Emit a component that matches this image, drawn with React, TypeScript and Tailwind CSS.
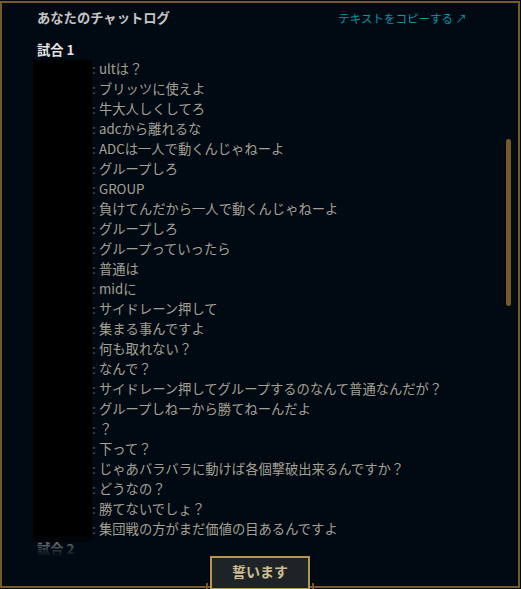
const matches = [
  {
    title: "試合 1",
    lines: [
      "ultは？",
      "ブリッツに使えよ",
      "牛大人しくしてろ",
      "adcから離れるな",
      "ADCは一人で動くんじゃねーよ",
      "グループしろ",
      "GROUP",
      "負けてんだから一人で動くんじゃねーよ",
      "グループしろ",
      "グループっていったら",
      "普通は",
      "midに",
      "サイドレーン押して",
      "集まる事んですよ",
      "何も取れない？",
      "なんで？",
      "サイドレーン押してグループするのなんて普通なんだが？",
      "グループしねーから勝てねーんだよ",
      "？",
      "下って？",
      "じゃあバラバラに動けば各個撃破出来るんですか？",
      "どうなの？",
      "勝てないでしょ？",
      "集団戦の方がまだ価値の目あるんですよ",
    ],
  },
  { title: "試合 2", lines: ["グループしろ", "GROUP"] },
];

function ChatBlock({ title, lines }: { title: string; lines: string[] }) {
  return (
    <div>
      <h3 className="h-[19px] pl-[35px] text-[13.3px] leading-[19px] font-bold text-[#e4e4e4]">{title}</h3>
      <div className="flex pl-[31px]">
        {/* names are hidden */}
        <div className="relative z-10 mt-px -mb-[3px] w-[59px] bg-black" />
        <ul>
          {lines.map((line, i) => (
            <li key={i} className="flex h-[20px] items-center text-[13.3px] text-[#a5a092]">
              <span className="w-[7px] text-[#58554d]">:</span>
              <span>{line}</span>
            </li>
          ))}
        </ul>
      </div>
    </div>
  );
}

export default function App() {
  return (
    <div
      className="min-h-screen bg-[#010a13] pt-px"
      style={{ fontFamily: '"Noto Sans CJK JP", "Noto Sans", sans-serif' }}
    >
      <div className="flex h-[587px] w-[520px] flex-col border-2 border-[#785a28]">
        <div className="flex h-[30px] shrink-0 items-center justify-between pl-[35px] pr-[51px]">
          <h2 className="text-[13.3px] font-bold text-[#c4c4c4]">あなたのチャットログ</h2>
          <a href="#" className="mt-[2px] text-[11.5px] text-[#0596aa]">
            テキストをコピーする ↗
          </a>
        </div>

        <div className="relative h-[523px] shrink-0 overflow-hidden pt-[7px]">
          {matches.map((m) => (
            <ChatBlock key={m.title} title={m.title} lines={m.lines} />
          ))}
          <div className="absolute inset-x-0 bottom-0 z-20 h-[20px] bg-gradient-to-b from-[#010a13]/30 to-[#010a13]" />
          <div className="absolute top-[106px] right-[7px] h-[167px] w-[5px] rounded-full bg-[#785a28]" />
        </div>

        <div className="flex justify-center">
          <div className="relative">
            <span className="absolute bottom-[-4px] left-[-4px] h-[11px] w-[2px] bg-[#785a28]" />
            <span className="absolute bottom-[-4px] right-[-4px] h-[11px] w-[2px] bg-[#785a28]" />
            <button className="h-[34px] w-[100px] border-2 border-[#b8954f] bg-[#1e2328] text-[14px] font-bold text-[#cdbe91]">
              <span className="-mt-[3px] block">誓います</span>
            </button>
          </div>
        </div>
      </div>
    </div>
  );
}
